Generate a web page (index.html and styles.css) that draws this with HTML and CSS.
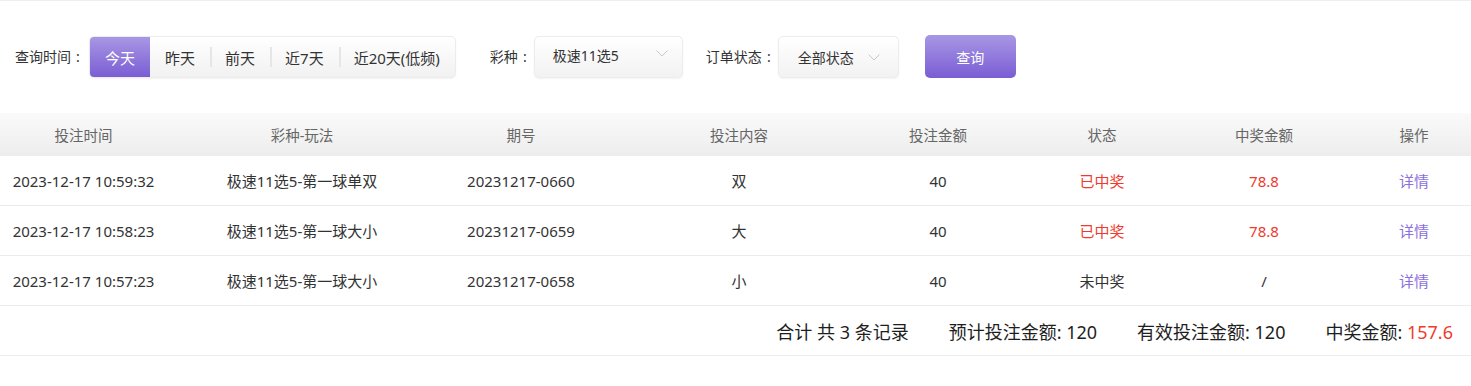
FILE: index.html
```html
<!DOCTYPE html>
<html lang="zh-CN">
<head>
<meta charset="utf-8">
<title>投注记录</title>
<link rel="stylesheet" href="styles.css">
</head>
<body>
<div class="page">
  <div class="filters">
    <span class="label label-time">查询时间<span class="colon">:</span></span>
    <div class="seg">
      <span class="seg-item active">今天</span>
      <span class="seg-item">昨天</span>
      <span class="seg-item">前天</span>
      <span class="seg-item">近7天</span>
      <span class="seg-item">近20天(低频)</span>
    </div>
    <span class="label label-lottery">彩种<span class="colon">:</span></span>
    <div class="select select-lottery">
      <span>极速11选5</span>
      <svg class="chev" width="12" height="7" viewBox="0 0 12 7"><path d="M0.5 0.5 L6 6 L11.5 0.5" fill="none" stroke="#c8c8c8" stroke-width="1"/></svg>
    </div>
    <span class="label label-status">订单状态<span class="colon">:</span></span>
    <div class="select select-status">
      <span>全部状态</span>
      <svg class="chev" width="12" height="7" viewBox="0 0 12 7"><path d="M0.5 0.5 L6 6 L11.5 0.5" fill="none" stroke="#c8c8c8" stroke-width="1"/></svg>
    </div>
    <button class="query">查询</button>
  </div>

  <div class="table">
    <div class="row head">
      <div class="cell">投注时间</div>
      <div class="cell">彩种-玩法</div>
      <div class="cell">期号</div>
      <div class="cell">投注内容</div>
      <div class="cell">投注金额</div>
      <div class="cell">状态</div>
      <div class="cell">中奖金额</div>
      <div class="cell op">操作</div>
    </div>
    <div class="row">
      <div class="cell">2023-12-17 10:59:32</div>
      <div class="cell">极速11选5-第一球单双</div>
      <div class="cell">20231217-0660</div>
      <div class="cell">双</div>
      <div class="cell">40</div>
      <div class="cell win">已中奖</div>
      <div class="cell win">78.8</div>
      <div class="cell op link">详情</div>
    </div>
    <div class="row">
      <div class="cell">2023-12-17 10:58:23</div>
      <div class="cell">极速11选5-第一球大小</div>
      <div class="cell">20231217-0659</div>
      <div class="cell">大</div>
      <div class="cell">40</div>
      <div class="cell win">已中奖</div>
      <div class="cell win">78.8</div>
      <div class="cell op link">详情</div>
    </div>
    <div class="row">
      <div class="cell">2023-12-17 10:57:23</div>
      <div class="cell">极速11选5-第一球大小</div>
      <div class="cell">20231217-0658</div>
      <div class="cell">小</div>
      <div class="cell">40</div>
      <div class="cell">未中奖</div>
      <div class="cell">/</div>
      <div class="cell op link">详情</div>
    </div>
    <div class="summary">
      <span>合计 共 3 条记录</span>
      <span>预计投注金额: 120</span>
      <span>有效投注金额: 120</span>
      <span>中奖金额: <em class="red">157.6</em></span>
    </div>
  </div>
</div>
</body>
</html>
```

FILE: styles.css
```css
* { box-sizing: border-box; }
html, body { margin: 0; padding: 0; background: #fff; }
body {
  font-family: "Noto Sans", "Noto Sans CJK SC", "Microsoft YaHei", sans-serif;
  font-size: 14px;
  color: #333;
}
.page {
  width: 1471px;
  border-top: 1px solid #efefef;
}
.filters {
  display: flex;
  align-items: center;
  padding: 35px 0 0 15px;
  height: 77px;
}
.label {
  display: inline-flex;
  font-size: 14px;
  line-height: 20px;
  color: #333;
  white-space: nowrap;
}
.colon {
  display: inline-block;
  width: 14px;
  text-align: center;
}
.seg {
  display: flex;
  align-items: center;
  height: 42px;
  margin-left: 4px;
  border: 1px solid #ececec;
  border-radius: 5px;
  background: linear-gradient(#ffffff, #f1f1f1);
  box-shadow: 0 1px 2px rgba(0,0,0,0.05);
  overflow: hidden;
}
.seg-item {
  position: relative;
  height: 100%;
  display: flex;
  align-items: center;
  padding: 0 15px;
  font-size: 15px;
  color: #333;
  white-space: nowrap;
}
.seg-item + .seg-item::before {
  content: "";
  position: absolute;
  left: 0;
  top: 10px;
  bottom: 10px;
  width: 2px;
  background: #e6e6e6;
}
.seg-item.active {
  color: #fff;
  background: linear-gradient(#a897e4, #7a5dd4);
}
.seg-item.active + .seg-item::before { display: none; }
.label-lottery { margin-left: 34px; }
.label-status { margin-left: 23px; }
.select {
  display: flex;
  align-items: center;
  justify-content: space-between;
  height: 42px;
  margin-left: 2px;
  border: 1px solid #ececec;
  border-radius: 5px;
  background: linear-gradient(#ffffff, #f2f2f2);
  box-shadow: 0 1px 2px rgba(0,0,0,0.05);
  color: #333;
  white-space: nowrap;
}
.select-lottery { width: 149px; padding: 0 14px 4px 18px; }
.select-lottery .chev { margin-bottom: 3px; }
.select-status { width: 121px; padding: 0 18px 0 19px; }
.query {
  margin-left: 26px;
  width: 91px;
  height: 43px;
  border: 0;
  border-radius: 5px;
  background: linear-gradient(#a897e4, #7a5dd4);
  color: #fff;
  font-family: inherit;
  font-size: 14px;
  margin-top: -1px;
}
.table {
  margin-top: 35px;
}
.row {
  display: grid;
  grid-template-columns: 167px 270px 168px 268px 130px 198px 126px 144px;
  height: 50px;
  align-items: center;
  border-bottom: 1px solid #ececec;
  font-size: 15px;
}
.row.head {
  height: 43px;
  background: linear-gradient(#fafafa, #ededed);
  color: #666;
  border-bottom: 0;
  font-size: 14.5px;
}
.cell {
  text-align: center;
  white-space: nowrap;
  line-height: 20px;
}
.cell.op { padding-left: 30px; }
.win { color: #ef3a2e; }
.link { color: #8a70e0; }
.summary {
  display: flex;
  justify-content: flex-end;
  align-items: center;
  gap: 40px;
  height: 50px;
  padding-right: 18px;
  border-bottom: 1px solid #ececec;
  font-size: 18px;
  color: #1e1e1e;
}
.summary em { font-style: normal; }
.red { color: #ef3a2e; }
```
